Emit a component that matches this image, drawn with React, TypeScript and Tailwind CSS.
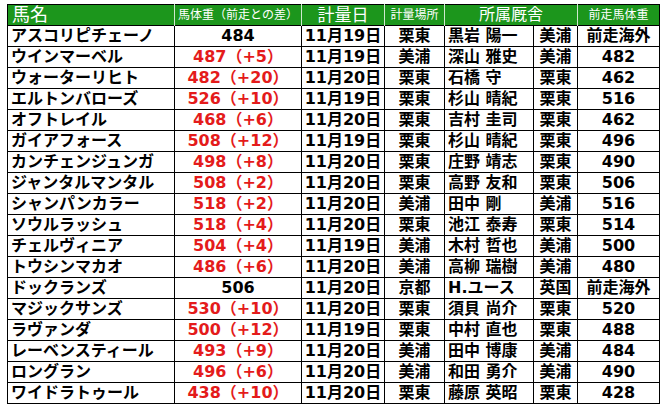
// 馬体重一覧テーブル（計量日・計量場所・所属厩舎・前走馬体重）
type Row = {
  name: string;
  weight: string;
  diff?: string;
  date: string;
  place: string;
  trainer: string;
  stable: string;
  prev: string;
};

const rows: Row[] = [
  { name: "アスコリピチェーノ", weight: "484", date: "11月19日", place: "栗東", trainer: "黒岩 陽一", stable: "美浦", prev: "前走海外" },
  { name: "ウインマーベル", weight: "487", diff: "+5", date: "11月19日", place: "美浦", trainer: "深山 雅史", stable: "美浦", prev: "482" },
  { name: "ウォーターリヒト", weight: "482", diff: "+20", date: "11月20日", place: "栗東", trainer: "石橋 守", stable: "栗東", prev: "462" },
  { name: "エルトンバローズ", weight: "526", diff: "+10", date: "11月19日", place: "栗東", trainer: "杉山 晴紀", stable: "栗東", prev: "516" },
  { name: "オフトレイル", weight: "468", diff: "+6", date: "11月20日", place: "栗東", trainer: "吉村 圭司", stable: "栗東", prev: "462" },
  { name: "ガイアフォース", weight: "508", diff: "+12", date: "11月19日", place: "栗東", trainer: "杉山 晴紀", stable: "栗東", prev: "496" },
  { name: "カンチェンジュンガ", weight: "498", diff: "+8", date: "11月20日", place: "栗東", trainer: "庄野 靖志", stable: "栗東", prev: "490" },
  { name: "ジャンタルマンタル", weight: "508", diff: "+2", date: "11月20日", place: "栗東", trainer: "高野 友和", stable: "栗東", prev: "506" },
  { name: "シャンパンカラー", weight: "518", diff: "+2", date: "11月20日", place: "美浦", trainer: "田中 剛", stable: "美浦", prev: "516" },
  { name: "ソウルラッシュ", weight: "518", diff: "+4", date: "11月20日", place: "栗東", trainer: "池江 泰寿", stable: "栗東", prev: "514" },
  { name: "チェルヴィニア", weight: "504", diff: "+4", date: "11月19日", place: "美浦", trainer: "木村 哲也", stable: "美浦", prev: "500" },
  { name: "トウシンマカオ", weight: "486", diff: "+6", date: "11月20日", place: "美浦", trainer: "高柳 瑞樹", stable: "美浦", prev: "480" },
  { name: "ドックランズ", weight: "506", date: "11月20日", place: "京都", trainer: "H.ユース", stable: "英国", prev: "前走海外" },
  { name: "マジックサンズ", weight: "530", diff: "+10", date: "11月20日", place: "栗東", trainer: "須貝 尚介", stable: "栗東", prev: "520" },
  { name: "ラヴァンダ", weight: "500", diff: "+12", date: "11月19日", place: "栗東", trainer: "中村 直也", stable: "栗東", prev: "488" },
  { name: "レーベンスティール", weight: "493", diff: "+9", date: "11月20日", place: "美浦", trainer: "田中 博康", stable: "美浦", prev: "484" },
  { name: "ロングラン", weight: "496", diff: "+6", date: "11月20日", place: "美浦", trainer: "和田 勇介", stable: "美浦", prev: "490" },
  { name: "ワイドラトゥール", weight: "438", diff: "+10", date: "11月20日", place: "栗東", trainer: "藤原 英昭", stable: "栗東", prev: "428" },
];

const th = "border-x border-x-[#cfe8cf] p-0 font-normal text-white leading-none";
const td = "border border-black p-0 leading-none";

export default function App() {
  return (
    <div className="h-[410px] w-[668px] bg-white pl-[7px] pt-[4px] font-['DejaVu_Sans','Noto_Sans_CJK_JP',sans-serif] text-black">
      <table className="w-[652px] table-fixed border-collapse border border-black">
        <colgroup>
          <col className="w-[167px]" />
          <col className="w-[127px]" />
          <col className="w-[83px]" />
          <col className="w-[60px]" />
          <col className="w-[89px]" />
          <col className="w-[44px]" />
          <col className="w-[82px]" />
        </colgroup>
        <thead>
          <tr className="h-[21px] border border-black bg-[#1c961c]">
            <th className={`${th} border-l-black pl-[4px] text-left text-[18px]`}>馬名</th>
            <th className={`${th} text-[12px]`}>馬体重（前走との差）</th>
            <th className={`${th} text-[17px]`}>計量日</th>
            <th className={`${th} text-[12px]`}>計量場所</th>
            <th colSpan={2} className={`${th} text-[16px]`}>所属厩舎</th>
            <th className={`${th} border-r-black text-[12px]`}>前走馬体重</th>
          </tr>
        </thead>
        <tbody className="text-[16px] font-bold">
          {rows.map((r) => (
            <tr key={r.name} className="h-[21px]">
              <td className={`${td} pl-[3px] text-left`}>{r.name}</td>
              <td className={`${td} text-center ${r.diff ? "text-[#e41b1b]" : ""}`}>
                {r.diff ? `${r.weight}（${r.diff}）` : r.weight}
              </td>
              <td className={`${td} text-center`}>{r.date}</td>
              <td className={`${td} text-center`}>{r.place}</td>
              <td className={`${td} pl-[3px] text-left`}>{r.trainer}</td>
              <td className={`${td} text-center`}>{r.stable}</td>
              <td className={`${td} text-center`}>{r.prev}</td>
            </tr>
          ))}
        </tbody>
      </table>
    </div>
  );
}
